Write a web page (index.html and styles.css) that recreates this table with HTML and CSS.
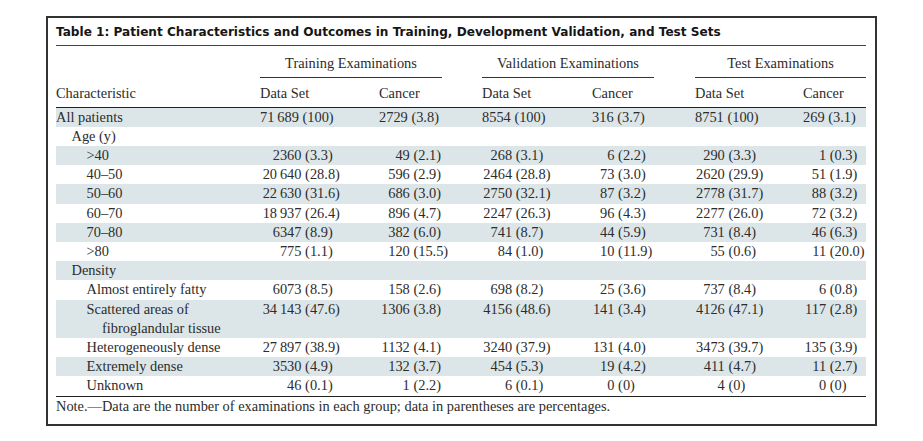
FILE: index.html
```html
<!DOCTYPE html>
<html lang="en">
<head>
<meta charset="utf-8">
<title>Table 1</title>
<link rel="stylesheet" href="styles.css">
</head>
<body>
<div class="frame">
  <div class="title">Table 1: Patient Characteristics and Outcomes in Training, Development Validation, and Test Sets</div>
  <table class="tbl">
    <colgroup>
      <col class="w0"><col class="w1"><col class="w2"><col class="w3"><col class="w4"><col class="w5"><col class="w6">
    </colgroup>
    <thead>
      <tr class="grp">
        <th></th>
        <th colspan="2"><div class="gl g1">Training Examinations</div></th>
        <th colspan="2"><div class="gl g2">Validation Examinations</div></th>
        <th colspan="2"><div class="gl g3">Test Examinations</div></th>
      </tr>
      <tr class="hd">
        <th>Characteristic</th>
        <th>Data Set</th><th>Cancer</th>
        <th>Data Set</th><th>Cancer</th>
        <th>Data Set</th><th>Cancer</th>
      </tr>
    </thead>
    <tbody>
      <tr class="all">
        <td>All patients</td>
        <td>71&thinsp;689 (100)</td><td>2729 (3.8)</td>
        <td>8554 (100)</td><td>316 (3.7)</td>
        <td>8751 (100)</td><td>269 (3.1)</td>
      </tr>
      <tr>
        <td class="l1">Age (y)</td><td></td><td></td><td></td><td></td><td></td><td></td>
      </tr>
      <tr>
        <td class="l2">&gt;40</td>
        <td><span class="n">2360</span> (3.3)</td><td><span class="n">49</span> (2.1)</td>
        <td><span class="n">268</span> (3.1)</td><td><span class="n">6</span> (2.2)</td>
        <td><span class="n">290</span> (3.3)</td><td><span class="n">1</span> (0.3)</td>
      </tr>
      <tr>
        <td class="l2">40–50</td>
        <td><span class="n">20&thinsp;640</span> (28.8)</td><td><span class="n">596</span> (2.9)</td>
        <td><span class="n">2464</span> (28.8)</td><td><span class="n">73</span> (3.0)</td>
        <td><span class="n">2620</span> (29.9)</td><td><span class="n">51</span> (1.9)</td>
      </tr>
      <tr>
        <td class="l2">50–60</td>
        <td><span class="n">22&thinsp;630</span> (31.6)</td><td><span class="n">686</span> (3.0)</td>
        <td><span class="n">2750</span> (32.1)</td><td><span class="n">87</span> (3.2)</td>
        <td><span class="n">2778</span> (31.7)</td><td><span class="n">88</span> (3.2)</td>
      </tr>
      <tr>
        <td class="l2">60–70</td>
        <td><span class="n">18&thinsp;937</span> (26.4)</td><td><span class="n">896</span> (4.7)</td>
        <td><span class="n">2247</span> (26.3)</td><td><span class="n">96</span> (4.3)</td>
        <td><span class="n">2277</span> (26.0)</td><td><span class="n">72</span> (3.2)</td>
      </tr>
      <tr>
        <td class="l2">70–80</td>
        <td><span class="n">6347</span> (8.9)</td><td><span class="n">382</span> (6.0)</td>
        <td><span class="n">741</span> (8.7)</td><td><span class="n">44</span> (5.9)</td>
        <td><span class="n">731</span> (8.4)</td><td><span class="n">46</span> (6.3)</td>
      </tr>
      <tr>
        <td class="l2">&gt;80</td>
        <td><span class="n">775</span> (1.1)</td><td><span class="n">120</span> (15.5)</td>
        <td><span class="n">84</span> (1.0)</td><td><span class="n">10</span> (11.9)</td>
        <td><span class="n">55</span> (0.6)</td><td><span class="n">11</span> (20.0)</td>
      </tr>
      <tr>
        <td class="l1">Density</td><td></td><td></td><td></td><td></td><td></td><td></td>
      </tr>
      <tr>
        <td class="l2">Almost entirely fatty</td>
        <td><span class="n">6073</span> (8.5)</td><td><span class="n">158</span> (2.6)</td>
        <td><span class="n">698</span> (8.2)</td><td><span class="n">25</span> (3.6)</td>
        <td><span class="n">737</span> (8.4)</td><td><span class="n">6</span> (0.8)</td>
      </tr>
      <tr>
        <td class="hang">Scattered areas of<br>fibroglandular tissue</td>
        <td><span class="n">34&thinsp;143</span> (47.6)</td><td><span class="n">1306</span> (3.8)</td>
        <td><span class="n">4156</span> (48.6)</td><td><span class="n">141</span> (3.4)</td>
        <td><span class="n">4126</span> (47.1)</td><td><span class="n">117</span> (2.8)</td>
      </tr>
      <tr>
        <td class="l2">Heterogeneously dense</td>
        <td><span class="n">27&thinsp;897</span> (38.9)</td><td><span class="n">1132</span> (4.1)</td>
        <td><span class="n">3240</span> (37.9)</td><td><span class="n">131</span> (4.0)</td>
        <td><span class="n">3473</span> (39.7)</td><td><span class="n">135</span> (3.9)</td>
      </tr>
      <tr>
        <td class="l2">Extremely dense</td>
        <td><span class="n">3530</span> (4.9)</td><td><span class="n">132</span> (3.7)</td>
        <td><span class="n">454</span> (5.3)</td><td><span class="n">19</span> (4.2)</td>
        <td><span class="n">411</span> (4.7)</td><td><span class="n">11</span> (2.7)</td>
      </tr>
      <tr class="last">
        <td class="l2">Unknown</td>
        <td><span class="n">46</span> (0.1)</td><td><span class="n">1</span> (2.2)</td>
        <td><span class="n">6</span> (0.1)</td><td><span class="n">0</span> (0)</td>
        <td><span class="n">4</span> (0)</td><td><span class="n">0</span> (0)</td>
      </tr>
    </tbody>
  </table>
  <div class="note">Note.—Data are the number of examinations in each group; data in parentheses are percentages.</div>
</div>
</body>
</html>
```
FILE: styles.css
```css
html, body {
  margin: 0;
  padding: 0;
  background: #ffffff;
}
body {
  padding: 16px 0 0 46px;
}
.frame {
  width: 810px;
  border: 2px solid #333333;
  padding: 0 9px 8px 8px;
  color: #2c2c2c;
  font-family: "Liberation Serif", "Times New Roman", serif;
  font-size: 14.4px;
}
.title {
  font-family: "DejaVu Sans", sans-serif;
  font-weight: bold;
  font-size: 12.1px;
  line-height: 16px;
  color: #161616;
  padding: 6px 0 5px;
  border-bottom: 1px solid #444444;
  white-space: nowrap;
}
.tbl {
  width: 810px;
  table-layout: fixed;
  border-collapse: collapse;
  border-spacing: 0;
}
.w0 { width: 204px; }
.w1 { width: 119px; }
.w2 { width: 103px; }
.w3 { width: 110px; }
.w4 { width: 103px; }
.w5 { width: 108px; }
.w6 { width: 63px; }
.tbl th, .tbl td {
  padding: 0;
  font-weight: normal;
  text-align: left;
  vertical-align: top;
  line-height: 19.2px;
  white-space: nowrap;
}
.grp th {
  padding-top: 8px;
}
.gl {
  text-align: center;
  padding-bottom: 3.4px;
  border-bottom: 1px solid #333333;
}
.g1 { margin-right: 40px; }
.g2 { margin-right: 41px; }
.hd th {
  padding-top: 6.4px;
  padding-bottom: 3.4px;
  border-bottom: 1.3px solid #222222;
}
.tbl tbody tr:nth-child(odd) td {
  background: #dce6e9;
}
.tbl tbody tr.last td {
  border-bottom: 1px solid #222222;
}
.tbl td.l1 { padding-left: 15.5px; }
.tbl td.l2 { padding-left: 30.5px; }
.tbl td.hang {
  padding-left: 46px;
  text-indent: -15.5px;
}
.n {
  display: inline-block;
  text-align: right;
  text-indent: 0;
}
.tbl td:nth-child(2) .n { width: 41.5px; }
.tbl td:nth-child(3) .n { width: 30.8px; }
.tbl td:nth-child(4) .n { width: 30.1px; }
.tbl td:nth-child(5) .n { width: 22.5px; }
.tbl td:nth-child(6) .n { width: 29.8px; }
.tbl td:nth-child(7) .n { width: 23.1px; }
.note {
  line-height: 19.2px;
  padding-top: 0.4px;
}
```
